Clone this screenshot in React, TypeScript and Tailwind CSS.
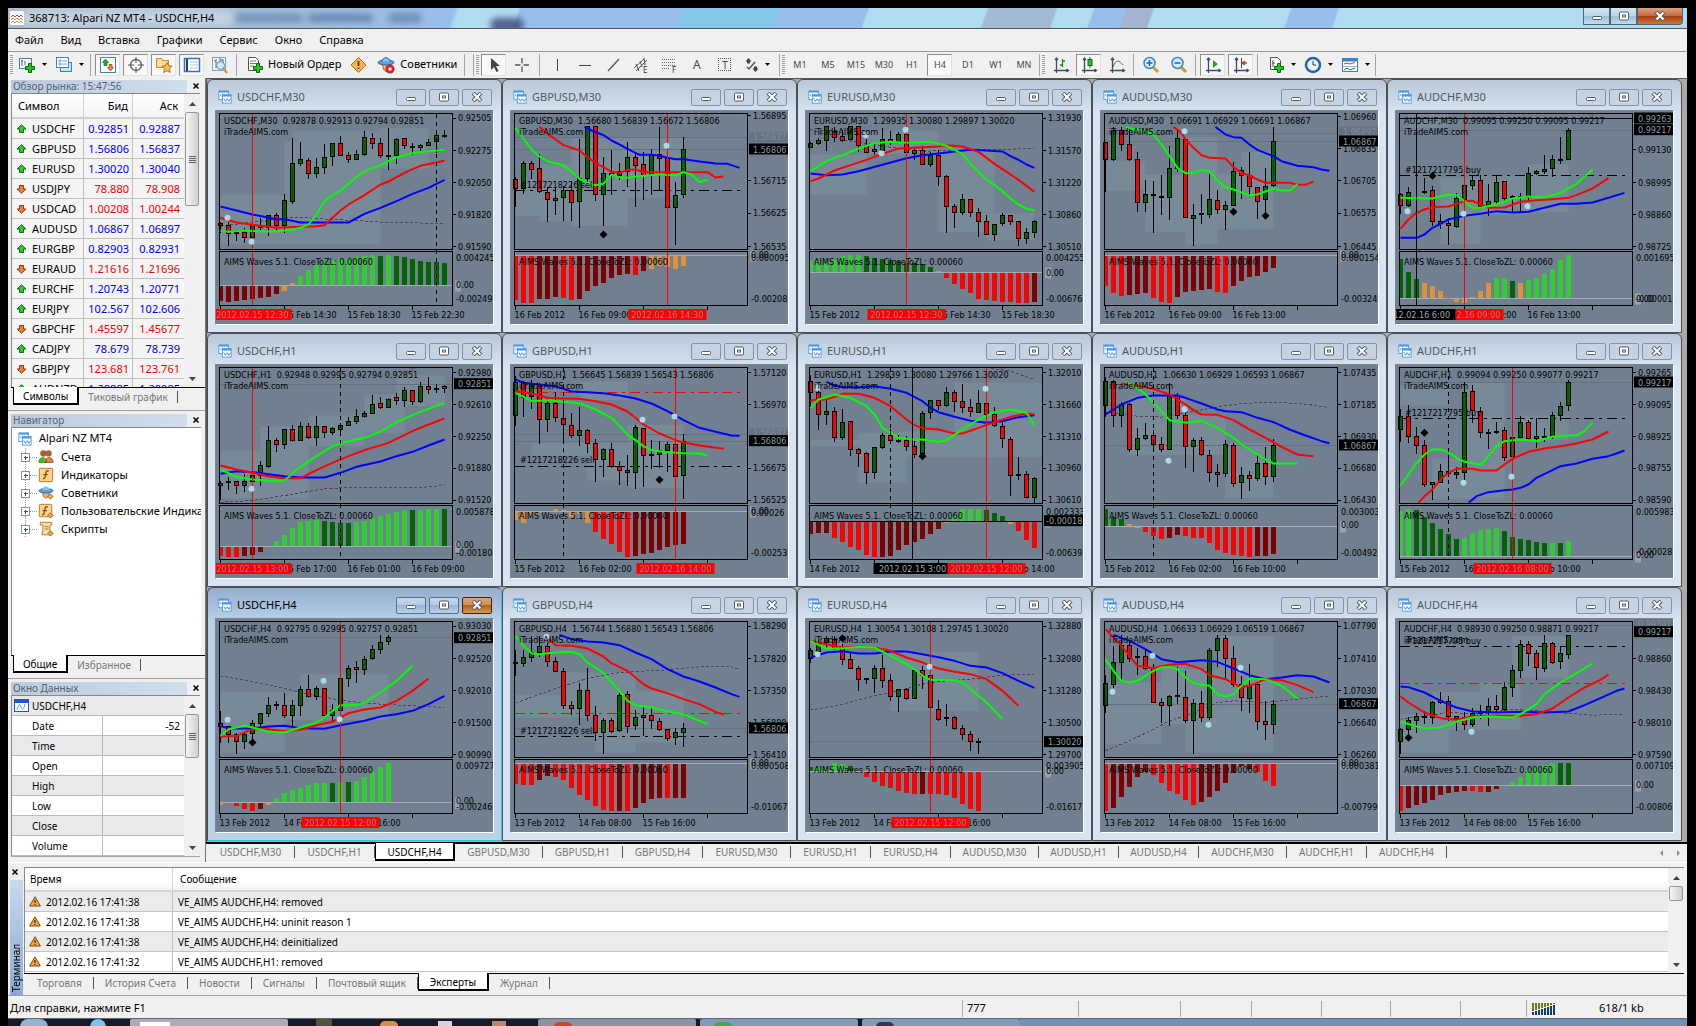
import { useState, ReactNode } from 'react';
import clsx from 'clsx';

// Chart data. Vertical values are in thirds of a pixel, horizontal ones are bar numbers.
interface Chart {
  symbol: string;
  quote: string;
  top: number;
  bars: string;
  blue: string;
  red: string;
  green: string;
  trend?: string;
  zero: number;
  waves: string;
  prices: [string, number][];
  tags?: [string, number][];
  ghosts?: [string, number][];
  scale: [string, number][];
  times: [string, number][];
  stamps?: [string, number, 'red' | 'black'][];
  vlines?: [number, 'red' | 'black' | 'dash'][];
  hlines?: [number, 'red' | 'black' | 'grey' | 'solid'][];
  order?: [string, number];
  dots?: [number, number][];
  diamonds?: [number, number][];
  zones?: [number, number, number, number][];
}

const charts: Chart[] = [
  {
    symbol: 'USDCHF,M30', quote: '0.92878 0.92913 0.92794 0.92851', top: 107,
    bars: 'd432,438,442,463 d432,442,468,503 u455,463,466,488 d448,463,478,493 u430,443,478,490 d418,443,448,455 u410,412,448,473 d405,412,442,455 u348,367,442,465 u178,256,370,377 u192,244,256,263 d240,248,286,302 u240,269,287,300 u198,238,268,286 u195,197,237,264 d174,196,232,232 d220,233,244,254 u214,230,244,244 u158,180,229,233 d165,182,196,213 d178,196,233,240 u148,232,234,275 u180,184,233,258 d178,182,202,212 u195,206,208,230 u196,202,208,217 u182,193,202,203 u165,172,192,225 d156,172,175,180',
    blue: '0:386 4:410 7:424 8:424 10:434 16:434 18:408 20:390 22:370 24:348 26:330 28:306',
    red: '0:420 2:434 4:441 7:450 10:447 12:445 13:442 14:420 15:398 16:380 18:352 20:320 21:311 22:298 23:285 24:274 25:264 27:254 28:248',
    green: '0:458 1:462 3:458 5:461 7:461 9:455 10:450 11:440 12:410 13:370 14:352 15:338 16:318 17:298 18:280 20:262 21:250 22:238 24:226 26:220 28:216',
    trend: '0:445 5:430 9:418 11:420 14:425 17:428 20:433 28:437',
    zero: 622,
    waves: 'm670 m672 m669 m666 m663 m660 m656 m648 o640 o615 l594 l575 l560 l550 l545 l542 l540 l538 l534 l532 g533 l531 g534 g537 g543 g549 g552 g552 g555',
    prices: [['0.92505', 121], ['0.92275', 218], ['0.92050', 314], ['0.91820', 410], ['0.91590', 506]],
    scale: [['0.004245', 541], ['0.00', 620], ['-0.00249', 662]],
    times: [['15 Feb 14:30', 8], ['15 Feb 18:30', 16], ['15 Feb 22:30', 24]],
    stamps: [['2012.02.15 12:30', 4, 'red']],
    vlines: [[4, 'red'], [27, 'dash']],
    dots: [[1, 420], [4, 492]],
    zones: [[0, 350, 8, 500], [8, 190, 9, 500], [9, 160, 20, 500], [20, 150, 26, 273]],
  },
  {
    symbol: 'GBPUSD,M30', quote: '1.56680 1.56839 1.56672 1.56806', top: 107,
    bars: 'd295,304,331,387 u247,256,331,348 d249,256,274,303 d226,271,340,345 d326,343,364,432 u325,361,368,410 u324,338,359,427 d307,339,374,427 u182,301,370,449 u147,147,301,310 d147,147,349,368 u235,286,349,444 d216,286,293,349 u254,281,294,306 u190,238,281,327 d225,238,262,387 d220,260,292,366 u213,229,292,349 d147,229,241,338 d240,241,388,399 u312,352,388,500 u177,214,349,359',
    blue: '8.6:147 9.5:158 11:172 12:188 13:200 14:213 15.5:231 17:231 18:234 19:240 20:244 21:244 23:251 25:257 26.5:258 28:270',
    red: '3:147 4:168 5:185 6:202 8:218 9:238 10:255 11:268 12:282 13:285 14:276 15:275 16:283 24:283 25:299 26:296',
    green: '0:150 1:182 2:215 3:236 4:250 6:262 7:282 8:303 9:315 10:322 11:318 12:290 13:298 14:300 16:294 18:290 20:293 21:283 22:290 23:313 24:306',
    zero: 533,
    waves: 'r667 r675 r675 m663 m663 m657 r660 r666 m663 m640 m624 m615 m600 m591 m588 r591 m579 o573 o563 o567 o573 o564',
    prices: [['1.56895', 113], ['1.56715', 308], ['1.56625', 406], ['1.56535', 506]],
    ghosts: [['1.56837', 178]],
    tags: [['1.56806', 212]],
    scale: [['0.00', 531], ['0.000095', 541], ['-0.00208', 662]],
    times: [['16 Feb 2012', 0], ['16 Feb 09:00', 8]],
    stamps: [['2012.02.16 14:30', 19, 'red']],
    vlines: [[19, 'red']],
    hlines: [[338, 'black'], [178, 'grey'], [214, 'grey']],
    order: ['#1217218226 sell', 320],
    dots: [[19, 204]], diamonds: [[11, 470]],
    zones: [[0, 305, 3, 414], [3, 260, 7, 430], [7, 180, 14, 443], [14, 180, 21, 360]],
  },
  {
    symbol: 'EURUSD,M30', quote: '1.29935 1.30080 1.29897 1.30020', top: 107,
    bars: 'u190,198,210,210 u178,187,196,200 u147,147,188,217 d147,160,178,190 d155,175,188,190 u147,147,184,186 d147,147,203,220 d182,202,224,224 u197,216,222,230 u150,184,217,225 d158,184,192,200 u160,169,190,192 d147,169,223,252 u213,217,227,245 d202,217,260,260 u222,233,260,265 d215,233,295,322 d290,295,385,464 d378,386,403,449 u348,364,403,410 d365,365,403,415 d388,403,430,477 d409,431,469,469 u437,439,469,488 u405,412,437,444 d410,412,430,440 d427,431,481,503 u449,463,481,497 u424,430,463,478',
    blue: '0:287 2:292 4:290 6:280 9:261 12:241 14:232 16:227 18:221 20:216 22:218 24:221 25:235 26:246 27:260 28:270',
    red: '0:310 1:302 3:278 5:262 7:246 9:228 11:212 13:210 16:206 17:202 19:206 21:222 22:240 23:258 24:274 25:290 26:306 27:324 28:342',
    green: '0:280 2:250 4:232 6:212 8:196 10:192 12:195 15:192 17:204 19:228 20:258 21:282 22:305 23:322 24:340 25:362 26:380 27:393 28:397',
    trend: '0:155 4:186 7:197 10:208 14:220 20:217 28:212',
    zero: 585,
    waves: 'l549 l549 l548 l546 l534 l531 l531 g534 g541 g544 g546 g550 g556 g555 g557 g568 o579 r600 r618 r633 r645 r663 r666 r669 r672 r672 r675 r675 m672',
    prices: [['1.31930', 121], ['1.31570', 218], ['1.31220', 314], ['1.30860', 410], ['1.30510', 506]],
    scale: [['0.004255', 541], ['0.00', 584], ['-0.00676', 662]],
    times: [['15 Feb 2012', 0], ['15 Feb 14:30', 16], ['15 Feb 18:30', 24]],
    stamps: [['2012.02.15 12:30', 12, 'red']],
    vlines: [[12, 'red']],
    dots: [[7, 172], [9, 226], [12, 156]],
    zones: [[0, 230, 7, 350], [7, 160, 16, 228], [16, 215, 23, 462], [22, 405, 28, 487]],
  },
  {
    symbol: 'AUDUSD,M30', quote: '1.06691 1.06929 1.06691 1.06867', top: 107,
    bars: 'd190,193,246,341 u147,157,246,247 d147,157,199,219 d147,199,244,249 d222,244,373,402 u306,349,373,402 d308,349,352,464 d291,355,358,411 u204,271,358,425 u153,181,271,280 d182,184,418,420 u377,412,421,503 u348,407,409,437 u287,364,409,420 d335,367,394,407 u367,382,394,456 u250,280,382,383 d267,277,292,362 d222,292,325,355 d328,328,370,422 u270,325,366,400 u147,190,322,325',
    blue: '13.8:147 15:170 16:178 17:180 18:200 19:216 20:226 21:235 22:250 24:264 26:268 27:275 28:279',
    red: '8.5:147 9.5:165 10:185 11:210 12:232 13:240 15:242 16:268 17:285 18:293 19:305 20:315 23:315 24:321 25:321 26:311',
    green: '2.5:147 3.5:154 4.5:157 6:170 7:200 8:235 9:270 10:286 11:286 12:277 13:280 14:308 15:328 16:335 18:353 19:350 20:341 21:332 22:338 23:338 24:319',
    zero: 533,
    waves: 'r624 r645 r654 m650 m648 m645 r660 r672 r675 m657 m642 m639 m636 m633 r642 r645 m624 m609 m597 m594 m582 m570',
    prices: [['1.06960', 116], ['1.06835', 213], ['1.06705', 308], ['1.06575', 406], ['1.06445', 506]],
    ghosts: [['1.06897', 161]],
    tags: [['1.06867', 188]],
    scale: [['0.00', 531], ['0.000154', 541], ['-0.00324', 662]],
    times: [['16 Feb 2012', 0], ['16 Feb 09:00', 8], ['16 Feb 13:00', 16]],
    hlines: [[166, 'grey'], [190, 'grey']],
    dots: [[10, 160]], diamonds: [[16, 402], [20, 414]],
    zones: [[0, 250, 5, 338], [5, 290, 10, 461], [10, 180, 14, 500], [14, 288, 17, 453], [17, 222, 21, 453]],
  },
  {
    symbol: 'AUDCHF,M30', quote: '0.99095 0.99250 0.99095 0.99217', top: 107,
    bars: 'd345,349,382,407 u327,344,382,387 - d300,340,344,348 d322,338,430,443 d407,431,437,452 d420,437,442,500 u344,361,445,450 u302,322,364,368 u290,307,322,334 d290,308,385,388 u317,370,382,413 u290,313,370,378 d308,310,361,370 u350,355,360,404 d345,355,360,402 u267,286,360,368 u275,281,286,289 u231,274,281,288 u229,244,271,297 d177,244,245,257 u148,157,244,246',
    blue: '0:480 2:480 3:470 4:450 5:438 6:425 8:414 10:408 12:400 14:404 16:402 18:390 20:378 22:378 24:374 26:360 28:345',
    red: '0:453 1:425 2:405 3:395 4:388 6:386 8:370 9:369 10:380 11:390 13:389 15:372 17:367 19:364 21:360 22:352 24:332 26:301',
    green: '0:360 4:362 6:350 7:352 8:370 9:390 10:390 12:380 14:362 16:356 18:359 20:345 22:318 24:275',
    zero: 663,
    waves: 'g543 g582 g603 o615 o624 o639 o660 o672 o675 o657 o639 o615 l600 l600 g609 o615 l606 l600 l588 l573 l546 l531',
    prices: [['0.99130', 215], ['0.98995', 314], ['0.98860', 410], ['0.98725', 506]],
    tags: [['0.99263', 119], ['0.99217', 154]],
    scale: [['0.001695', 541], ['0.00', 662], ['-0.000019', 662]],
    times: [['16 Feb 09:00', 8], ['16 Feb 13:00', 16]],
    stamps: [['2012.02.16 09:00', 8, 'red'], ['2012.02.16 6:00', 2, 'black']],
    vlines: [[8, 'red'], [2, 'black']],
    hlines: [[293, 'black'], [122, 'solid'], [157, 'grey']],
    order: ['#1217217795 buy', 275],
    dots: [[1, 400], [8, 408], [16, 385]], diamonds: [[4, 294]],
    zones: [[5, 300, 10, 497], [10, 293, 16, 410], [16, 260, 21, 402], [1, 107, 6, 150]],
  },
  {
    symbol: 'USDCHF,H1', quote: '0.92948 0.92995 0.92794 0.92851', top: 104,
    bars: 'd444,452,458,500 d431,445,449,471 d443,445,459,482 u422,445,458,476 u410,428,445,490 u383,398,428,458 u279,322,401,403 d315,322,335,355 u288,290,334,347 d275,290,324,326 u267,280,322,322 d269,281,315,317 u249,280,314,338 d280,281,299,314 u281,287,299,305 u268,278,289,301 u251,265,278,279 u228,250,266,272 u233,241,252,255 u184,214,241,241 d190,213,223,227 u194,199,224,224 d180,195,203,216 u160,172,203,222 d170,172,206,215 u147,160,206,209 d132,160,169,182 d151,167,170,178 d155,162,166,179',
    blue: '0:423 2:415 4:418 6:424 8:430 10:434 13:434 15:420 17:402 20:386 22:370 24:357 26:338 28:320',
    red: '0:398 2:410 4:420 6:430 8:436 10:436 12:412 14:390 16:370 18:352 21:330 24:295 26:275 28:257',
    green: '0:410 2:432 4:440 6:444 8:443 10:402 12:370 14:340 16:325 18:315 20:296 22:268 24:247 26:228 28:210',
    trend: '0:508 4:503 7:492 10:480 13:468 15:465 25:464 27:460 28:454',
    zero: 640,
    waves: 'r670 r672 r671 m669 m666 m657 - l624 l606 l585 l567 l563 l561 g564 g567 g570 g570 l567 l564 l555 l549 l543 l537 l531 g531 l531 l528 l528 g528',
    prices: [['0.92980', 119], ['0.92610', 215], ['0.92250', 311], ['0.91880', 406], ['0.91520', 502]],
    tags: [['0.92851', 151]],
    scale: [['0.005878', 538], ['0.00', 637], ['-0.00180', 659]],
    times: [['15 Feb 17:00', 8], ['16 Feb 01:00', 16], ['16 Feb 09:00', 24]],
    stamps: [['2012.02.15 13:00', 4, 'red']],
    vlines: [[4, 'red'], [15, 'dash']],
    hlines: [[154, 'grey']],
    dots: [[4, 468]],
    zones: [[0, 354, 5, 497], [5, 280, 11, 497], [11, 248, 18, 340], [18, 185, 23, 300], [22, 128, 28, 220]],
  },
  {
    symbol: 'GBPUSD,H1', quote: '1.56645 1.56839 1.56543 1.56806', top: 104,
    bars: 'u128,150,247,278 d144,150,193,250 u140,155,192,228 d150,155,259,333 u190,211,259,297 d175,211,253,265 d210,256,275,333 d240,278,307,314 u222,292,307,338 d288,292,331,360 d318,332,380,447 u345,349,379,430 d330,349,400,405 d382,401,412,456 d366,412,419,457 u274,283,418,468 d285,287,367,462 d320,364,367,407 u322,352,364,405 u325,334,352,417 d280,335,430,435 u302,325,428,497',
    blue: '0:140 1:150 3:155 5:160 7:176 9:178 11:181 13:188 15:197 17:212 19:235 20:248 21:262 23:285 25:297 27:308 28:309',
    red: '0:175 2:182 4:195 6:197 8:198 10:205 12:215 14:236 15:255 16:275 18:302 20:322 21:328 23:338 26:348',
    green: '0:180 1:192 2:205 4:202 6:207 8:211 10:230 12:255 13:280 14:305 15:322 16:340 17:352 19:358 21:361 23:362 24:368',
    zero: 535,
    waves: 'o560 o570 o548 o541 - o528 o531 o552 o543 o570 r597 r618 r633 r657 r671 m669 m663 m660 m651 m642 m635 m633',
    prices: [['1.57120', 119], ['1.56970', 215], ['1.56675', 406], ['1.56525', 502]],
    ghosts: [['1.56837', 301]],
    tags: [['1.56806', 322]],
    scale: [['0.00', 533], ['0.00026', 540], ['-0.00253', 659]],
    times: [['15 Feb 2012', 0], ['16 Feb 02:00', 8]],
    stamps: [['2012.02.16 14:00', 20, 'red']],
    vlines: [[6, 'dash'], [20, 'red']],
    hlines: [[178, 'red'], [400, 'black'], [304, 'grey'], [325, 'grey']],
    order: ['#1217218226 sell', 382],
    dots: [[16, 261], [20, 251]], diamonds: [[18, 441]],
    zones: [[2, 330, 9, 368], [9, 330, 14, 443], [8, 146, 14, 202], [14, 276, 21, 465]],
  },
  {
    symbol: 'EURUSD,H1', quote: '1.29839 1.30080 1.29766 1.30020', top: 104,
    bars: 'd125,145,178,220 d172,178,244,291 u200,237,245,276 d222,235,313,326 u228,268,313,321 d262,267,349,367 d345,349,361,401 d355,361,418,453 u340,344,418,437 u300,308,344,346 d287,308,322,325 d306,322,323,330 d308,324,340,354 d324,342,365,375 u234,241,363,372 u202,203,240,256 d203,203,217,230 u162,178,217,222 d171,180,205,235 d151,206,223,239 d198,223,236,250 u170,211,238,240 d147,211,245,280 d220,244,279,281 d262,280,318,345 d312,320,427,489 d370,424,427,440 d413,424,493,495 u430,436,493,510',
    blue: '2:147 3:158 4:163 6:163 8:160 10:168 12:180 14:205 15:225 16:238 18:252 20:264 22:270 24:265 26:253 28:247',
    red: '0:202 2:200 4:183 6:183 8:195 10:220 12:260 13:277 14:286 16:290 18:302 19:302 21:285 23:268 25:252 27:242 28:244',
    green: '0:225 1:200 3:185 5:195 7:220 8:245 9:285 11:315 13:320 14:320 16:327 17:322 19:290 21:260 23:238 25:230 27:240 28:278',
    trend: '22:104 25:115 28:140',
    zero: 566,
    waves: 'm603 m600 m600 r615 r627 r641 r650 r665 r671 m671 m668 m650 m636 m627 m618 m603 m588 o571 l545 l528 l528 l527 g531 g540 g549 o573 r594 r621 r645',
    prices: [['1.32010', 119], ['1.31660', 215], ['1.31310', 311], ['1.30960', 406], ['1.30610', 502]],
    scale: [['0.002333', 538], ['-0.00639', 659]],
    tags: [['-0.00018', 562]],
    times: [['14 Feb 2012', 0], ['15 Feb 14:00', 24]],
    stamps: [['2012.02.15 3:00', 12.7, 'black'], ['2012.02.15 12:00', 22, 'red']],
    vlines: [[10, 'dash'], [12.7, 'black'], [22, 'red']],
    hlines: [[566, 'solid']],
    dots: [[1, 165], [22, 168]], diamonds: [[14, 370]],
    zones: [[0, 321, 6, 340], [6, 300, 12, 450], [11, 296, 18, 372], [18, 150, 29, 372]],
  },
  {
    symbol: 'AUDUSD,H1', quote: '1.06630 1.06929 1.06593 1.06867', top: 104,
    bars: 'u130,147,217,252 d140,147,247,280 u205,214,247,280 d210,214,350,355 u283,316,350,369 u268,307,317,320 d290,308,334,350 d312,334,349,357 u150,187,349,350 d180,187,247,258 d240,247,340,403 u315,322,341,417 d310,322,366,369 d350,367,419,445 d392,419,425,460 u320,334,423,430 d330,337,451,460 u400,427,450,497 d412,427,437,473 u363,391,436,443 d340,391,430,456 u316,337,430,445',
    blue: '0:245 2:215 4:195 6:188 9:188 10:195 12:212 14:230 15:235 17:238 19:255 21:268 23:290 25:308 27:325 28:331',
    red: '2:152 4:158 6:168 8:185 10:215 11:232 12:245 14:246 16:262 18:290 20:315 22:342 24:365 26:370',
    green: '2.5:147 4:165 5:185 6:210 7:235 8:262 10:270 12:264 14:285 16:315 17:335 19:365 20:380 21:392 24:392',
    trend: '0:238 4:250 7:253 10:240 14:222 17:212 21:208 25:214 28:224',
    zero: 580,
    waves: 'g528 g552 g558 o573 o586 r597 r609 r618 m615 m606 r609 r615 r615 r630 r650 r660 r665 r670 r672 m669 m668 m663',
    prices: [['1.07435', 119], ['1.07185', 215], ['1.06930', 311], ['1.06680', 406], ['1.06430', 502]],
    tags: [['1.06867', 335]],
    scale: [['0.003003', 538], ['0.00', 577], ['-0.00492', 659]],
    times: [['15 Feb 2012', 0], ['16 Feb 02:00', 8], ['16 Feb 10:00', 16]],
    vlines: [[6, 'dash']],
    hlines: [[337, 'grey']],
    dots: [[10, 229], [8, 384]],
    zones: [[3, 190, 10, 366], [10, 245, 15, 366], [15, 330, 21, 495]],
  },
  {
    symbol: 'AUDCHF,H1', quote: '0.99094 0.99250 0.99077 0.99217', top: 104,
    bars: 'u228,250,290,325 d215,250,310,330 d280,310,338,362 d320,337,456,462 u448,448,456,500 u393,415,448,450 d366,415,423,430 u400,418,425,436 u147,178,418,447 d155,175,232,270 d222,235,300,313 d286,298,301,348 d265,295,297,303 d280,292,373,384 u290,313,372,465 u248,268,313,320 d260,268,318,322 u255,310,318,345 u285,310,313,326 u235,247,311,318 u205,220,247,262 u140,148,217,232',
    blue: '8.5:510 9.5:490 11:478 13:472 14:470 15:465 16:455 17:435 19:412 20:400 22:392 24:378 26:370 27:362 28:353',
    red: '2.3:510 3:490 4:470 5:440 6:420 7:408 9:408 10:413 12:413 13:395 14:378 16:357 18:347 20:340 22:332 24:320 26:296',
    green: '0:458 1:425 2:390 3:365 4:350 5:350 6:358 7:375 8:387 10:395 11:370 12:340 13:325 15:320 17:325 19:312 21:308 22:308 23:295 24:270',
    zero: 670,
    waves: 'l534 l528 g531 g552 g570 g588 g603 g618 l615 l600 l591 l588 l585 g594 g612 g618 g621 g627 g630 l630 g630 l624',
    prices: [['0.99265', 119], ['0.99095', 215], ['0.98925', 311], ['0.98755', 406], ['0.98590', 502]],
    tags: [['0.99217', 146]],
    scale: [['0.005983', 538], ['-0.00028', 657], ['0.00', 667]],
    times: [['15 Feb 2012', 0], ['16 Feb 02:00', 8], ['16 Feb 10:00', 16]],
    stamps: [['2012.02.16 08:00', 14, 'red']],
    vlines: [[6, 'dash'], [14, 'red']],
    hlines: [[256, 'black'], [148, 'grey']],
    order: ['#1217217795 buy', 240],
    dots: [[8, 450], [14, 432]], diamonds: [[3, 300]],
    zones: [[0, 160, 6, 218], [4, 378, 8, 497], [8, 418, 13, 497], [8, 150, 13, 418], [15, 248, 21, 322]],
  },
  {
    symbol: 'USDCHF,H4', quote: '0.92795 0.92995 0.92757 0.92851', top: 107,
    bars: 'd375,412,423,470 d420,423,445,470 d440,445,467,503 u440,446,467,487 u402,413,444,460 u380,383,412,427 u333,358,384,392 d345,356,359,371 d321,358,388,395 u340,358,388,425 u300,310,358,389 d265,310,331,335 u300,307,331,342 d304,307,388,395 u354,373,388,405 u246,277,373,400 u235,247,277,303 d225,246,250,290 u210,220,252,267 u175,190,217,222 u147,169,190,203 u147,156,168,176',
    blue: '0:420 1:428 4:428 6:422 8:420 10:427 13:429 15:418 18:405 20:392 22:385 24:375 26:355 28:330',
    red: '0:453 2:450 4:430 6:430 8:436 10:432 12:418 14:408 15:395 16:382 18:371 20:365 22:345 24:315 26:278',
    green: '0:450 1:430 3:420 4:425 6:438 8:440 10:425 12:410 13:395 14:375 15:358 17:358 18:350 20:320 22:285 24:240',
    trend: '0:270 4:288 8:308 12:330 16:347 20:355 24:360 28:365',
    zero: 649,
    waves: 'o657 - r660 r669 r675 m669 o657 l636 l621 l612 l606 l597 l591 l591 g591 l588 g588 l585 l573 l558 l543 l531',
    prices: [['0.93030', 121], ['0.92520', 218], ['0.92010', 314], ['0.91500', 410], ['0.90990', 506]],
    tags: [['0.92851', 154]],
    scale: [['0.009727', 541], ['0.00', 646], ['-0.00246', 662]],
    times: [['13 Feb 2012', 0], ['14 Feb 08:00', 8], ['15 Feb 16:00', 16]],
    stamps: [['2012.02.15 12:00', 15, 'red']],
    vlines: [[15, 'red']],
    hlines: [[156, 'grey']],
    dots: [[1, 402], [13, 285], [15, 400]], diamonds: [[4, 470]],
    zones: [[0, 318, 8, 500], [8, 318, 10, 402], [10, 265, 21, 402]],
  },
  {
    symbol: 'GBPUSD,H4', quote: '1.56744 1.56880 1.56543 1.56806', top: 107,
    bars: 'd190,229,232,270 u190,214,232,243 u148,199,214,228 u148,181,199,213 d170,181,226,243 d213,226,256,258 d245,256,358,367 d345,358,368,386 u290,313,367,417 d246,313,388,405 d360,388,440,463 u395,405,440,503 d395,405,437,440 u320,328,433,436 d315,325,421,440 u370,396,420,430 u358,388,396,450 d365,388,405,428 d395,406,430,435 d427,430,457,463 u425,439,455,475 u410,427,439,483',
    blue: '5.5:147 7:160 9:167 11:170 13:178 15:200 17:220 19:250 21:272 23:287 25:305 27:325 28:333',
    red: '4:155 5:178 7:180 9:188 11:212 12:232 14:255 15:275 16:295 17:308 19:322 21:340 23:355 25:378 26:386',
    green: '0:150 1:180 2:202 3:205 5:200 7:198 8:205 9:230 10:245 11:262 12:290 13:315 14:345 15:358 17:365 19:376 21:385 22:395 24:415',
    trend: '0:352 3:325 6:300 9:278 12:263 15:257 19:252 23:243 27:243 28:250',
    zero: 533,
    waves: 'r594 r597 r597 m582 m570 r573 r582 r606 r627 r642 r660 r672 r675 m675 r675 m666 m651 m639 m636 r636 m636 m636',
    prices: [['1.58290', 121], ['1.57820', 218], ['1.57350', 314], ['1.56880', 410], ['1.56410', 506]],
    tags: [['1.56806', 425]],
    scale: [['0.00', 531], ['0.000508', 541], ['-0.01067', 662]],
    times: [['13 Feb 2012', 0], ['14 Feb 08:00', 8], ['15 Feb 16:00', 16]],
    hlines: [[382, 'red'], [451, 'black'], [427, 'grey']],
    order: ['#1217218226 sell', 434],
    dots: [[4, 153]],
    zones: [[0, 327, 6, 395], [6, 260, 10, 395], [10, 260, 15, 500], [15, 316, 21, 470]],
  },
  {
    symbol: 'EURUSD,H4', quote: '1.30054 1.30108 1.29745 1.30020', top: 107,
    bars: 'u185,193,219,230 u160,172,196,205 u150,158,170,187 d150,160,188,190 d172,188,220,235 d200,220,247,248 d240,247,280,313 d275,279,281,293 u235,247,277,320 d205,247,283,305 d262,283,331,343 u308,311,332,377 d305,310,337,342 u250,254,337,338 d240,255,269,308 d230,268,364,403 d340,372,402,405 d353,394,397,420 d388,395,427,432 d415,427,445,460 d435,445,467,495 d455,466,469,503',
    blue: '0:215 2:200 4:196 6:203 8:203 10:197 12:197 14:205 16:214 18:225 20:240 22:245 24:262 26:285 28:306',
    red: '0:165 2:175 4:185 6:182 8:185 10:195 12:215 14:230 15:240 16:248 18:258 20:265 22:280 24:315 26:360',
    green: '0:165 2:188 4:188 6:183 8:185 10:210 12:235 13:250 14:270 15:282 18:283 19:290 20:310 22:350 24:400',
    trend: '0:373 4:355 8:330 11:315 14:295 16:287 20:280 24:268 28:266',
    zero: 556,
    waves: 'g543 l545 l548 l531 l534 g540 o562 r573 r588 r600 r606 r615 r621 r624 m624 r624 r624 r627 r636 r654 r669 r675',
    prices: [['1.32880', 121], ['1.32080', 218], ['1.31280', 314], ['1.30500', 410], ['1.29700', 506]],
    tags: [['1.30020', 466]],
    scale: [['0.003905', 541], ['0.00', 556], ['-0.01617', 662]],
    times: [['13 Feb 2012', 0], ['14 Feb 08:00', 8], ['15 Feb 16:00', 16]],
    stamps: [['2012.02.15 12:00', 15, 'red']],
    vlines: [[15, 'red']],
    hlines: [[468, 'grey']],
    dots: [[1, 205], [15, 243]], diamonds: [[4, 157]],
    zones: [[0, 160, 4, 282], [4, 200, 10, 282], [10, 200, 21, 375]],
  },
  {
    symbol: 'AUDUSD,H4', quote: '1.06633 1.06929 1.06519 1.06867', top: 107,
    bars: 'u265,292,358,380 u180,230,295,305 u147,178,230,285 d165,178,217,228 d185,213,216,265 d190,213,247,250 d232,247,349,350 d335,350,358,410 u325,331,358,420 d243,330,332,352 d255,334,403,410 u337,352,404,503 d315,352,394,407 u185,193,396,400 u147,157,193,243 d147,157,219,280 d180,219,295,302 d268,295,334,375 u232,298,337,380 d290,295,408,430 d345,408,415,461 u340,355,415,443',
    blue: '1:147 3:165 5:190 7:220 9:229 12:223 14:228 16:248 18:268 20:280 22:275 24:268 26:272 28:290',
    red: '0:130 1:155 2:180 3:210 4:240 6:247 8:237 10:234 12:250 13:268 15:280 17:305 18:300 20:280 22:283 24:298 26:319',
    green: '0:220 1:255 2:285 3:290 4:285 6:255 7:245 8:243 9:250 10:275 11:292 13:300 14:325 15:332 16:325 17:300 18:278 20:280 22:300 24:338',
    trend: '0:495 3:465 6:430 8:405 10:390 12:370 14:350 16:345 20:350 24:340 28:330',
    zero: 533,
    waves: 'r675 m666 m633 m603 m573 m558 r567 r591 r615 r624 r642 r657 m648 m633 m615 m591 m560 m540 m548 r558 r585 r600',
    prices: [['1.07790', 121], ['1.07410', 218], ['1.07030', 314], ['1.06640', 410], ['1.06260', 506]],
    tags: [['1.06867', 352]],
    scale: [['0.00', 530], ['0.000381', 541], ['-0.00799', 662]],
    times: [['13 Feb 2012', 0], ['14 Feb 08:00', 8], ['15 Feb 16:00', 16]],
    hlines: [[355, 'grey']],
    dots: [[1, 318], [6, 210], [13, 417], [17, 246]],
    zones: [[0, 290, 7, 473], [7, 243, 10, 416], [10, 250, 14, 500], [14, 150, 21, 500]],
  },
  {
    symbol: 'AUDCHF,H4', quote: '0.98930 0.99250 0.98871 0.99217', top: 107,
    bars: 'u425,430,468,503 u392,403,430,445 u380,391,405,440 d375,391,394,413 u345,349,394,414 d318,343,349,354 d330,346,391,405 d388,391,398,435 d378,394,415,430 u366,382,415,423 u357,377,382,398 u335,361,376,419 d327,361,371,378 u287,304,371,375 u237,253,304,333 u160,175,253,275 d165,176,202,240 d192,202,244,280 u147,172,247,258 d168,172,229,232 u178,202,227,248 u147,150,206,218',
    blue: '0:302 1:304 3:320 5:345 7:365 9:377 12:380 15:378 18:380 21:377 23:358 25:337 27:315 28:308',
    red: '0:332 1:350 3:380 5:397 7:402 9:392 12:390 15:390 17:385 19:368 21:335 23:305 25:282 26:266',
    green: '0:408 2:422 3:428 5:425 7:408 9:395 11:392 14:395 15:385 17:355 18:325 20:290 22:262 24:233',
    trend: '0:400 6:380 10:385 14:370 18:377 24:388 28:386',
    zero: 598,
    waves: 'r675 m666 m657 m651 m642 m627 m621 m618 m615 r615 r618 m618 m609 - l588 l573 l552 l543 l537 l531 g531 g531',
    prices: [['0.98860', 218], ['0.98430', 314], ['0.98010', 410], ['0.97590', 506]],
    ghosts: [['0.99301', 113]],
    tags: [['0.99217', 136]],
    scale: [['0.007109', 541], ['0.00', 596], ['-0.00806', 662]],
    times: [['13 Feb 2012', 0], ['14 Feb 08:00', 8], ['15 Feb 16:00', 16]],
    hlines: [[293, 'red'], [182, 'black'], [118, 'grey']],
    order: ['#1217217795 buy', 164],
    dots: [[9, 438]], diamonds: [[1, 456]],
    zones: [[0, 385, 6, 500], [4, 318, 10, 432], [10, 290, 15, 432], [14, 150, 21, 275]],
  },
];

const waveColors: Record<string, string> = { m: '#800000', r: '#ff0000', o: '#e0923a', l: '#32cd32', g: '#006400' };

const x = (bar: number) => 4.5 + Math.round(bar * 8);

function ChartPlot({ chart }: { chart: Chart }) {
  const y = (v: number) => (v - chart.top) / 3 + 2.5;
  const snap = (v: number) => Math.floor(y(v)) + 0.5;
  const line = (points: string) =>
    points
      .split(' ')
      .map((p) => p.split(':').map(Number))
      .map(([i, v]) => `${x(i)},${y(v)}`)
      .join(' ');
  const zero = snap(chart.zero);

  return (
    <svg className="block h-[213px] w-full bg-[#708090] font-['DejaVu_Sans_Condensed','Noto_Sans',sans-serif] text-[9px]" role="img" aria-label={chart.symbol}>
      {chart.zones?.map(([a, t, b, l], i) => (
        <rect key={i} x={x(a)} y={y(t)} width={(b - a) * 8} height={(l - t) / 3} fill="#788998" />
      ))}
      <path d="M192 3h8l-4 4z" fill="#66717e" />

      <g shapeRendering="crispEdges" fill="none">
        {chart.hlines?.map(([v, kind]) => (
          <line
            key={v}
            x1="4"
            x2={kind === 'grey' || kind === 'solid' ? 237 : 229}
            y1={snap(v)}
            y2={snap(v)}
            stroke={kind === 'grey' ? '#65717f' : kind === 'red' ? '#ff0000' : '#000'}
            strokeDasharray={kind === 'red' || kind === 'black' ? '10 5 3 5' : undefined}
          />
        ))}
        {chart.trend && <polyline points={line(chart.trend)} stroke="#5a3d63" strokeDasharray="3 2" />}
      </g>

      <g shapeRendering="crispEdges">
        {chart.bars.split(' ').map((bar, i) => {
          if (bar === '-') return null;
          const [high, open, close, low] = bar.slice(1).split(',').map((v) => snap(Number(v)));
          return (
            <g key={i} stroke="#000">
              <line x1={x(i)} x2={x(i)} y1={high} y2={low} />
              <rect x={x(i) - 2} y={open} width="4" height={Math.max(close - open, 1)} fill={bar[0] === 'u' ? '#006400' : '#ff0000'} />
            </g>
          );
        })}
      </g>

      <g fill="none" strokeWidth="2" strokeLinejoin="round">
        <polyline points={line(chart.blue)} stroke="#0000ff" />
        <polyline points={line(chart.red)} stroke="#ff0000" />
        <polyline points={line(chart.green)} stroke="#00ff00" />
      </g>

      <g shapeRendering="crispEdges">
        <line x1="4" x2="237" y1={zero} y2={zero} stroke="#a3adb8" />
        {chart.waves.split(' ').map((wave, i) => {
          if (wave === '-') return null;
          const end = Math.round(y(Number(wave.slice(1))));
          const down = end > zero;
          return (
            <rect
              key={i}
              x={Math.max(x(i) - 2.5, 4)}
              y={down ? zero + 0.5 : end}
              width={i === 0 ? 3 : 5}
              height={Math.max(Math.abs(end - zero) - 0.5, 1)}
              fill={waveColors[wave[0]]}
            />
          );
        })}
        {chart.hlines?.filter(([v, kind]) => kind === 'solid' && v === chart.zero).map(([v]) => (
          <line key={v} x1="4" x2="237" y1={zero} y2={zero} stroke="#000" />
        ))}
        {chart.vlines?.map(([i, kind]) => (
          <line
            key={i}
            x1={x(i)}
            x2={x(i)}
            y1="3"
            y2="194"
            stroke={kind === 'red' ? '#ff0000' : '#000'}
            strokeDasharray={kind === 'dash' ? '4 4' : undefined}
          />
        ))}
      </g>
      {chart.dots?.map(([i, v]) => (
        <circle key={`${i}-${v}`} cx={x(i) - 1} cy={y(v)} r="3" fill="#add8e6" />
      ))}
      {chart.diamonds?.map(([i, v]) => (
        <path key={i} d={`M${x(i)} ${y(v) - 4}l4 4-4 4-4-4z`} fill="#000" />
      ))}

      <g shapeRendering="crispEdges" fill="none" stroke="#000">
        <rect x="3.5" y="2.5" width="233" height="136" />
        <rect x="3.5" y="140.5" width="233" height="54" />
        {[0, 8, 16, 24].map((i) => (
          <line key={i} x1={x(i)} x2={x(i)} y1="195" y2="199" />
        ))}
        {chart.prices.map(([label, v]) => (
          <line key={label} x1="237" x2="240" y1={snap(v)} y2={snap(v)} />
        ))}
      </g>

      <text x="8" y="13" xmlSpace="preserve">{`${chart.symbol}  ${chart.quote}`}</text>
      <text x="8" y="24">iTradeAIMS.com</text>
      <text x="8" y="154">AIMS Waves 5.1. CloseToZL: 0.00060</text>
      {chart.order && <text x="9" y={y(chart.order[1]) + 3}>{chart.order[0]}</text>}

      <rect x="239" y={zero - 5} width="6" height="11" fill="#97a2ae" />
      {chart.scale.map(([label, v]) => (
        <text key={label} x="240" y={y(v) + 3}>{label}</text>
      ))}
      {chart.prices.map(([label, v]) => (
        <text key={label} x="242" y={y(v) + 3}>{label}</text>
      ))}
      {chart.ghosts?.map(([label, v]) => (
        <g key={label}>
          <rect x="238" y={y(v) - 5} width="40" height="10" fill="#66727f" />
          <text x="242" y={y(v) + 3} fill="#808c99">{label}</text>
        </g>
      ))}
      {chart.tags?.map(([label, v]) => (
        <g key={label}>
          <rect x="238" y={y(v) - 5} width="40" height="11" />
          <text x={label[0] === '-' ? 240 : 242} y={y(v) + 4} fill="#8d9aa8">{label}</text>
        </g>
      ))}

      {chart.times.map(([label, i]) => (
        <text key={label} x={x(i) - 1} y="207">{label}</text>
      ))}
      {chart.stamps?.map(([label, i, kind]) => (
        <g key={label}>
          <rect x={x(i) - 39} y="198" width="78" height="11" fill={kind === 'red' ? '#ff0000' : '#000'} />
          <text x={x(i)} y="207" textAnchor="middle" fill={kind === 'red' ? '#93808a' : '#9aa6b3'}>{label}</text>
        </g>
      ))}
    </svg>
  );
}

function ChartIcon() {
  return (
    <svg viewBox="0 0 16 16" className="size-[14px] shrink-0" fill="none">
      <rect x="1" y="1" width="11" height="10" fill="#fff" stroke="#4a9ae0" />
      <path d="M1 2h11" stroke="#4a9ae0" strokeWidth="2" />
      <path d="M3 7V5M5 8V4" stroke="#4a9ae0" />
      <rect x="5" y="5" width="10" height="10" fill="#fff" stroke="#4a9ae0" />
      <path d="M5 6.5h10" stroke="#4a9ae0" strokeWidth="2" />
      <path d="M6.5 9.5l2 3.5 2-3 2 3 1.5-3" stroke="#3c7fc0" />
    </svg>
  );
}

function WindowGlyph({ kind }: { kind: 'min' | 'max' | 'close' }) {
  return (
    <svg viewBox="0 0 12 10" className="h-[10px] w-3" fill="none">
      {kind === 'min' && <rect x="1.5" y="5.5" width="9" height="3" rx="1" fill="#fff" stroke="#555d68" />}
      {kind === 'max' && (
        <>
          <rect x="1.5" y="1" width="9" height="8" rx="1" fill="#fff" stroke="#555d68" />
          <rect x="4.5" y="4" width="3" height="2" fill="#fff" stroke="#555d68" />
        </>
      )}
      {kind === 'close' && (
        <>
          <path d="M2 1l8 8M10 1l-8 8" stroke="#555d68" strokeWidth="4" />
          <path d="M2.5 1.5l7 7M9.5 1.5l-7 7" stroke="#fff" strokeWidth="2" />
        </>
      )}
    </svg>
  );
}

function ChartWindow({ chart, active, onSelect }: { chart: Chart; active: boolean; onSelect: () => void }) {
  return (
    <section
      onMouseDown={onSelect}
      className={clsx(
        'min-w-0 rounded-t-md border border-[#4a4f55] px-[7px] pb-[7px]',
        active
          ? 'border-r-[#38c0e8] border-b-[#38c0e8] bg-[linear-gradient(180deg,#95aecb_0px,#b9d1ea_34px,#b9d1ea_100%)]'
          : 'bg-[linear-gradient(180deg,#bac8d7_0px,#d7e4f2_34px,#d7e4f2_100%)]',
      )}
    >
      <header className="flex h-[30px] items-center gap-[5px] pt-[4px] pr-[2px] pl-[3px]">
        <ChartIcon />
        <h2 className={clsx('flex-1 text-[11px] leading-4', active ? 'text-black' : 'text-[#4c5a5c]')}>{chart.symbol}</h2>
        <div className="flex gap-[3px]">
          {(['min', 'max', 'close'] as const).map((kind) => (
            <button
              key={kind}
              type="button"
              aria-label={kind}
              className={clsx(
                'flex h-[17px] w-[30px] items-center justify-center rounded-[2px] border',
                active && kind === 'close'
                  ? 'border-[#4c1d0c] bg-[linear-gradient(180deg,#dba87c_0%,#cf8d55_48%,#b0601c_50%,#d99a4e_100%)]'
                  : active
                    ? 'border-[#586f8c] bg-[linear-gradient(180deg,#c4d6ea_0%,#b4cae3_48%,#9ab6d6_50%,#b8d0ea_100%)]'
                    : 'border-[#8494a8] bg-[#c5d3e2]',
              )}
            >
              <WindowGlyph kind={kind} />
            </button>
          ))}
        </div>
      </header>
      <div className="border border-t-[#7d858e] border-r-white border-b-white border-l-[#7d858e]">
        <ChartPlot chart={chart} />
      </div>
    </section>
  );
}

function ToolButton({ label, pressed, children }: { label: string; pressed?: boolean; children: ReactNode }) {
  return (
    <button
      type="button"
      aria-label={label}
      className={clsx(
        'flex h-[22px] w-[25px] shrink-0 items-center justify-center text-[9px] text-[#4a4a4a]',
        pressed && 'border border-t-[#8e8e8e] border-r-[#e2e2e2] border-b-[#e2e2e2] border-l-[#8e8e8e] bg-[#f8f8f8]',
      )}
    >
      {children}
    </button>
  );
}

function Icon({ children }: { children: ReactNode }) {
  return (
    <svg viewBox="0 0 18 18" className="size-[18px] shrink-0" fill="none">
      {children}
    </svg>
  );
}

const Caret = () => (
  <svg viewBox="0 0 5 3" className="h-[3px] w-[5px] shrink-0">
    <path d="M0 0h5L2.5 3z" />
  </svg>
);

const Grip = () => <span className="mx-[2px] h-[20px] w-[3px] shrink-0 bg-[repeating-linear-gradient(180deg,#a0a0a0_0px,#a0a0a0_1px,transparent_1px,transparent_2px)]" />;
const Rule = () => <span className="h-[22px] w-px shrink-0 bg-[#a5a5a5]" />;

const Plus = () => <path d="M10.5 7.5h3v3h3v3h-3v3h-3v-3h-3v-3h3z" fill="#1fc81f" stroke="#0a6a0a" />;
const Axes = () => <path d="M4.5 2v15M2 14.5h14M3 4l1.5-2L6 4M14.5 13l2 1.5-2 1.5" stroke="#3d4c66" strokeWidth="1.3" />;
const Magnifier = ({ plus }: { plus?: boolean }) => (
  <>
    <path d="M11 11l5 5" stroke="#d8962c" strokeWidth="3" />
    <circle cx="7.5" cy="7" r="5.5" fill="#d6ecfb" stroke="#3a86cc" strokeWidth="1.5" />
    <path d={plus ? 'M4.5 7h6M7.5 4v6' : 'M4.5 7h6'} stroke="#1c62a8" strokeWidth="1.5" />
  </>
);

function Toolbar() {
  return (
    <div className="flex h-[27px] shrink-0 items-center border-t border-[#999] bg-[#f0f0f0] pb-px">
      <Grip />
      <button type="button" aria-label="Новый график" className="ml-[3px] flex items-center gap-[6px]">
        <Icon>
          <rect x="1.5" y="2.5" width="12" height="10" fill="#fff" stroke="#3b82c4" />
          <path d="M3 5h2M4 4v6M7 5v4" stroke="#556" />
          <Plus />
        </Icon>
        <Caret />
      </button>
      <button type="button" aria-label="Профили" className="mr-[6px] ml-[8px] flex items-center gap-[6px]">
        <Icon>
          <rect x="5.5" y="6.5" width="11" height="9" fill="#cfe4f7" stroke="#3b82c4" />
          <rect x="1.5" y="1.5" width="12" height="10" fill="#fff" stroke="#3b82c4" />
          <path d="M3 5h9M5 3v7M3 8h9" stroke="#79a7d3" />
        </Icon>
        <Caret />
      </button>
      <Rule />
      <div className="ml-[4px] flex gap-[3px]">
        <ToolButton label="Обзор рынка" pressed>
          <Icon>
            <rect x="1.5" y="1.5" width="15" height="15" fill="#fff" stroke="#3b82c4" />
            <path d="M6.5 3l3 3.500H8v3H5v-3H3.500z" fill="#28b428" stroke="#0a6a0a" strokeWidth=".7" />
            <path d="M11.5 15l-3-3.500H10v-3h3v3h1.500z" fill="#f08c28" stroke="#8a3c00" strokeWidth=".7" />
          </Icon>
        </ToolButton>
        <ToolButton label="Окно данных" pressed>
          <Icon>
            <circle cx="9" cy="9" r="5.5" stroke="#555" strokeWidth="1.3" />
            <path d="M9 1v6M9 11v6M1 9h6M11 9h6" stroke="#555" />
          </Icon>
        </ToolButton>
        <ToolButton label="Навигатор" pressed>
          <Icon>
            <path d="M1.5 2.500h5l1 2h6v7h-12z" fill="#fbdc96" stroke="#c98a2a" />
            <path d="M12 6.500l1.600 3.200 3.400.5-2.500 2.500.7 3.800-3.200-1.700-3.200 1.700.7-3.800L7 10.200l3.400-.5z" fill="#ffbe55" stroke="#b5701c" />
          </Icon>
        </ToolButton>
        <ToolButton label="Терминал" pressed>
          <Icon>
            <rect x="1.5" y="2.5" width="15" height="13" fill="#fff" stroke="#2f73c5" strokeWidth="1.5" />
            <path d="M3 3h2v12H3z" fill="#2a3f5c" />
            <path d="M7 6h8M7 9h8M7 12h8" stroke="#a8c4e2" />
          </Icon>
        </ToolButton>
        <ToolButton label="Тестер стратегий">
          <Icon>
            <rect x="1.5" y="1.5" width="13" height="13" fill="#f4f8fb" stroke="#8aa0b5" />
            <path d="M5 3v9M9 2v5M12 3v4M3 5h2M9 4h3" stroke="#667" />
            <path d="M12 12l4 5" stroke="#d8962c" strokeWidth="2.5" />
            <circle cx="9.5" cy="9.5" r="4" fill="#cfe8fb" stroke="#4a90d0" />
          </Icon>
        </ToolButton>
      </div>
      <span className="ml-[4px]" />
      <Rule />
      <button type="button" className="ml-[9px] flex items-center gap-[4px] text-[11px]">
        <Icon>
          <path d="M2.5 1.500h7l3 3v10h-10z" fill="#fff" stroke="#555" />
          <path d="M4 5h6M4 7.500h6M4 10h4" stroke="#777" />
          <Plus />
        </Icon>
        Новый Ордер
      </button>
      <button type="button" aria-label="MetaEditor" className="ml-[9px]">
        <Icon>
          <path d="M8.5 1.500L16 9l-7.500 7.500L1 9z" fill="#f7b552" stroke="#b06f14" />
          <path d="M8.5 5v5M8.500 11.500V13" stroke="#8a3c00" strokeWidth="2" />
        </Icon>
      </button>
      <button type="button" className="mr-[7px] ml-[9px] flex items-center gap-[5px] text-[11px]">
        <Icon>
          <path d="M5 8h9l-1 6c-2 2-5 2-6 0z" fill="#f0b460" stroke="#b5701c" />
          <ellipse cx="9" cy="6.500" rx="8" ry="2.500" fill="#5aa0e0" stroke="#2a68b0" />
          <path d="M5 5.500c0-5 8-5 8 0" fill="#86c0f2" stroke="#2a68b0" />
          <circle cx="13" cy="13" r="4.500" fill="#d81e1e" />
          <rect x="11.500" y="11.500" width="3" height="3" fill="#fff" />
        </Icon>
        Советники
      </button>
      <Rule />
      <span className="w-[8px]" />
      <Rule />
      <Grip />
      <ToolButton label="Курсор" pressed>
        <Icon><path d="M6 2v12l3-3 2.500 5 2-1-2.500-5H15z" fill="#444" /></Icon>
      </ToolButton>
      <div className="mr-[5px] ml-[3px]">
        <ToolButton label="Перекрестие">
          <Icon><path d="M9 2v5.500M9 10.500V16M2 9h5.500M10.500 9H16" stroke="#555" strokeWidth="1.3" /></Icon>
        </ToolButton>
      </div>
      <Rule />
      <div className="ml-[4px] flex gap-[3px]">
        <ToolButton label="Вертикальная линия"><Icon><path d="M9.500 3v12" stroke="#444" /></Icon></ToolButton>
        <ToolButton label="Горизонтальная линия"><Icon><path d="M3 9.500h12" stroke="#444" /></Icon></ToolButton>
        <ToolButton label="Трендовая линия"><Icon><path d="M4 15L15 3" stroke="#555" strokeWidth="1.3" /></Icon></ToolButton>
        <ToolButton label="Равноудаленный канал">
          <Icon>
            <path d="M2 12L12 3M4 15L15 4M4 8l3 7M8 5l2 6M12 2l1 7" stroke="#555" />
            <text x="11" y="17" fontSize="8" fill="#333">E</text>
          </Icon>
        </ToolButton>
        <ToolButton label="Линии Фибоначчи">
          <Icon>
            <path d="M2 3.500h14M2 6.500h14M2 9.500h14M2 12.500h8" stroke="#666" strokeDasharray="1 1" />
            <text x="12" y="17" fontSize="8" fill="#333">F</text>
          </Icon>
        </ToolButton>
        <ToolButton label="Текст"><span className="text-[12px]">A</span></ToolButton>
        <ToolButton label="Текстовая метка">
          <span className="flex size-[13px] items-center justify-center border border-dotted border-[#555] text-[10px] leading-none">T</span>
        </ToolButton>
      </div>
      <button type="button" aria-label="Стрелки" className="mr-[9px] ml-[6px] flex items-center gap-[4px]">
        <Icon>
          <path d="M5.500 2l3 3.500H7v2H4v-2H2.500zM12.500 16l-3-3.500H11v-2h3v2h1.500z" fill="#444" />
          <path d="M4 11l2 2 6-7" stroke="#555" strokeWidth="1.5" />
        </Icon>
        <Caret />
      </button>
      <Rule />
      <Grip />
      <div className="flex gap-[3px]">
        {['M1', 'M5', 'M15', 'M30', 'H1', 'H4', 'D1', 'W1', 'MN'].map((period) => (
          <ToolButton key={period} label={period} pressed={period === 'H4'}>{period}</ToolButton>
        ))}
      </div>
      <span className="ml-[3px]" />
      <Rule />
      <Grip />
      <div className="mr-[4px] ml-px flex gap-[3px]">
        <ToolButton label="Бары"><Icon><Axes /><path d="M10.500 3v8M8 9h2M11 5h2" stroke="#1c8a1c" strokeWidth="1.3" /></Icon></ToolButton>
        <ToolButton label="Свечи" pressed>
          <Icon><Axes /><path d="M10 1v11" stroke="#0a6a0a" /><rect x="8" y="3.500" width="4" height="6" fill="#2bc42b" stroke="#0a6a0a" /></Icon>
        </ToolButton>
        <ToolButton label="Линия"><Icon><Axes /><path d="M5 11c3-8 6-7 10-2" stroke="#1c8a1c" /></Icon></ToolButton>
      </div>
      <Rule />
      <div className="mr-[4px] ml-[4px] flex gap-[3px]">
        <ToolButton label="Увеличить"><Icon><Magnifier plus /></Icon></ToolButton>
        <ToolButton label="Уменьшить"><Icon><Magnifier /></Icon></ToolButton>
      </div>
      <Rule />
      <div className="mr-[4px] ml-[4px] flex gap-[3px]">
        <ToolButton label="Автопрокрутка" pressed><Icon><Axes /><path d="M9 4l5 4-5 4z" fill="#22a822" /></Icon></ToolButton>
        <ToolButton label="Сдвиг графика" pressed><Icon><Axes /><path d="M9.500 2v10" stroke="#345" /><path d="M15 7h-4M13 5l-3 2 3 2" stroke="#b04a10" strokeWidth="1.3" /></Icon></ToolButton>
      </div>
      <Rule />
      <button type="button" aria-label="Индикаторы" className="ml-[9px] flex items-center gap-[6px]">
        <Icon>
          <path d="M3.500 1.500h7l3 3v9h-10z" fill="#fff" stroke="#555" />
          <path d="M6 4v7M5 7h3" stroke="#555" />
          <Plus />
        </Icon>
        <Caret />
      </button>
      <button type="button" aria-label="Периоды" className="ml-[8px] flex items-center gap-[6px]">
        <Icon>
          <circle cx="9" cy="9" r="7" fill="#e6f2fc" stroke="#1f63b5" strokeWidth="2.5" />
          <path d="M9 5v4h3" stroke="#333" />
        </Icon>
        <Caret />
      </button>
      <button type="button" aria-label="Шаблоны" className="mr-[5px] ml-[8px] flex items-center gap-[6px]">
        <Icon>
          <rect x="1.500" y="2.500" width="15" height="13" fill="#fff" stroke="#3b82c4" />
          <path d="M1 4h16" stroke="#3b82c4" strokeWidth="3" />
          <path d="M3 8l3-1 3 1 5-1.500" stroke="#b04a10" />
          <path d="M2 10.500h14" stroke="#8fb8e0" />
          <path d="M3 14l3-2 3 2 5-2" stroke="#1c8a1c" />
        </Icon>
        <Caret />
      </button>
      <Rule />
    </div>
  );
}

const CloseGlyph = () => (
  <svg viewBox="0 0 6 6" className="size-[6px]">
    <path d="M.5.500l5 5M5.500.500l-5 5" stroke="#000" strokeWidth="1.5" />
  </svg>
);

function PanelHeader({ title }: { title: string }) {
  return (
    <header className="flex h-[14px] items-center">
      <h2 className="flex-1 bg-[linear-gradient(90deg,#bccbdb,#d0deec)] pl-[2px] text-[10px] leading-[13px] text-[#566272]">{title}</h2>
      <button type="button" aria-label="Закрыть" className="mr-[6px] ml-[5px] flex w-[7px] items-center justify-center">
        <CloseGlyph />
      </button>
    </header>
  );
}

function Scrollbar({ thumb }: { thumb: string }) {
  return (
    <div className="flex w-[16px] shrink-0 flex-col items-center bg-[#f0f0f0]">
      <svg viewBox="0 0 7 4" className="mt-[8px] mb-[6px] h-[4px] w-[7px]"><path d="M0 4h7L3.500 0z" fill="#444" /></svg>
      <div className={clsx('flex w-[14px] flex-col items-center justify-center gap-px rounded-[2px] border border-[#979797] bg-[linear-gradient(90deg,#f6f6f6,#cfcfcf)]', thumb)}>
        {thumb !== 'h-[15px]' && [0, 1, 2, 3].map((i) => <span key={i} className="h-px w-[7px] bg-[#666]" />)}
      </div>
      <svg viewBox="0 0 7 4" className="mt-auto mb-[6px] h-[4px] w-[7px]"><path d="M0 0h7L3.500 4z" fill="#444" /></svg>
    </div>
  );
}

function Tabs({ items, active, wide }: { items: string[]; active: string; wide?: boolean }) {
  return (
    <div className="flex h-[19px] items-start border-t border-black pl-[2px]">
      {items.map((item) => (
        <button
          key={item}
          type="button"
          className={clsx(
            'text-[10px]',
            wide ? 'px-[11px]' : 'px-[9px]',
            item === active
              ? '-mt-px h-[18px] border border-t-0 border-r-2 border-b-2 border-black bg-white pt-[2px] leading-[15px] text-black'
              : 'mt-[3px] border-r border-[#555] leading-[12px] text-[#777]',
          )}
        >
          {item}
        </button>
      ))}
    </div>
  );
}

const quotes: [string, string, string, boolean][] = [
  ['USDCHF', '0.92851', '0.92887', true],
  ['GBPUSD', '1.56806', '1.56837', true],
  ['EURUSD', '1.30020', '1.30040', true],
  ['USDJPY', '78.880', '78.908', false],
  ['USDCAD', '1.00208', '1.00244', false],
  ['AUDUSD', '1.06867', '1.06897', true],
  ['EURGBP', '0.82903', '0.82931', true],
  ['EURAUD', '1.21616', '1.21696', false],
  ['EURCHF', '1.20743', '1.20771', true],
  ['EURJPY', '102.567', '102.606', true],
  ['GBPCHF', '1.45597', '1.45677', false],
  ['CADJPY', '78.679', '78.739', true],
  ['GBPJPY', '123.681', '123.761', false],
  ['AUDNZD', '1.28885', '1.29085', true],
];

function MarketWatch() {
  return (
    <section className="border-b border-[#a0a0a0] pt-px pb-[4px] pl-[3px]">
      <PanelHeader title="Обзор рынка: 15:47:56" />
      <div className="mr-[5px] flex h-[294px] overflow-hidden border-t border-l border-[#888]">
        <table className="h-fit flex-1 table-fixed border-separate border-spacing-0 text-[11px] leading-[14px]">
          <colgroup>
            <col />
            <col className="w-[49px]" />
            <col className="w-[51px]" />
          </colgroup>
          <thead>
            <tr className="h-[25px] bg-[linear-gradient(180deg,#fff,#f2f3f5)]">
              <th className="border-r border-b-2 border-[#d0d0d0] pl-[6px] text-left font-normal">Символ</th>
              <th className="border-r border-b-2 border-[#d0d0d0] pr-[4px] text-right font-normal">Бид</th>
              <th className="border-b-2 border-[#d0d0d0] pr-[6px] text-right font-normal">Аск</th>
            </tr>
          </thead>
          <tbody>
            {quotes.map(([symbol, bid, ask, up]) => (
              <tr key={symbol} className={clsx('h-[20px] bg-[#f4f4f4]', up ? 'text-[#0000f0]' : 'text-[#f00000]')}>
                <td className="border-r border-b border-[#c0c0c0] pl-[4px] text-black">
                  <span className="flex items-center gap-[5px]">
                    <svg viewBox="0 0 11 10" className="h-[10px] w-[11px]">
                      {up
                        ? <path d="M5.500.800L10 5H7.500v3.500h-4V5H1z" fill="#35c635" stroke="#0c6e0c" />
                        : <path d="M5.500 9.200L1 5h2.500V1.500h4V5H10z" fill="#e8823a" stroke="#8e3b0a" />}
                    </svg>
                    {symbol}
                  </span>
                </td>
                <td className="border-r border-b border-[#c0c0c0] pr-[3px] text-right">{bid}</td>
                <td className="border-b border-[#c0c0c0] pr-[4px] text-right">{ask}</td>
              </tr>
            ))}
          </tbody>
        </table>
        <Scrollbar thumb="h-[94px]" />
      </div>
      <Tabs items={['Символы', 'Тиковый график']} active="Символы" />
    </section>
  );
}

const tree: [string, ReactNode][] = [
  ['Счета', <>
    <circle cx="6" cy="5" r="3.500" fill="#a86428" />
    <circle cx="12" cy="5" r="3.500" fill="#a86428" />
    <path d="M1 15c0-7 9-7 9 0zM8 15c0-7 9-7 9 0z" fill="#d89048" stroke="#8a4c18" />
    <circle cx="4" cy="13" r="3" fill="#1fc81f" />
  </>],
  ['Индикаторы', <>
    <rect x="1.500" y="1.500" width="15" height="15" rx="1" fill="#ffd48a" stroke="#b5701c" />
    <path d="M12 4.500c-3-1-3 1-3.500 4s-.5 5-3 4.500M6 8.500h5" stroke="#8a4c18" strokeWidth="1.5" />
  </>],
  ['Советники', <>
    <path d="M5 8h8l-1 5c-2 2-5 2-6 0z" fill="#f0b460" stroke="#b5701c" />
    <ellipse cx="9" cy="6.500" rx="8" ry="2.500" fill="#5aa0e0" stroke="#2a68b0" />
    <path d="M5 5.500c0-5 8-5 8 0" fill="#86c0f2" />
    <path d="M14 10l3 3-3 3-3-3z" fill="#f2a84a" stroke="#a86010" />
  </>],
  ['Пользовательские Индикаторы', <>
    <rect x="1.500" y="1.500" width="14" height="14" rx="1" fill="#ffd48a" stroke="#b5701c" />
    <path d="M11 4.500c-3-1-3 1-3.500 4s-.5 5-3 4.500M5 8.500h5" stroke="#8a4c18" strokeWidth="1.5" />
    <path d="M14 11l3 3-3 3-3-3z" fill="#f2a84a" stroke="#a86010" />
  </>],
  ['Скрипты', <>
    <path d="M2.500 1.500h13v3h-2v8h2v3h-11v-3h1v-8h-3z" fill="#ffe0a8" stroke="#b5701c" />
    <path d="M7 6.500h5M7 9h5" stroke="#b5701c" />
    <path d="M14 11l3 3-3 3-3-3z" fill="#f2a84a" stroke="#a86010" />
  </>],
];

function Navigator() {
  return (
    <section className="border-b border-[#a0a0a0] pt-[2px] pb-[4px] pl-[3px]">
      <PanelHeader title="Навигатор" />
      <div className="mr-[4px] h-[228px] overflow-hidden border-t border-l border-[#888] bg-white pt-px text-[11px]">
        <div className="flex h-[19px] items-center gap-[7px] pl-[6px]">
          <ChartIcon />
          Alpari NZ MT4
        </div>
        <ul>
          {tree.map(([label, drawing]) => (
            <li key={label} className="flex h-[18px] items-center pl-[9px] whitespace-nowrap">
              <svg viewBox="0 0 16 18" className="h-[18px] w-[16px] shrink-0" fill="none" shapeRendering="crispEdges">
                <path d="M4.500 0v5M4.500 14v4M9 9.500h7" stroke="#999" strokeDasharray="1 1" />
                <rect x=".5" y="5.500" width="8" height="8" fill="#fff" stroke="#919191" />
                <path d="M2.500 9.500h4M4.500 7.500v4" stroke="#2b4f9e" />
              </svg>
              <svg viewBox="0 0 18 18" className="mr-[7px] ml-px size-[16px] shrink-0" fill="none">{drawing}</svg>
              {label}
            </li>
          ))}
        </ul>
      </div>
      <Tabs items={['Общие', 'Избранное']} active="Общие" />
    </section>
  );
}

function DataWindow() {
  return (
    <section className="pt-[2px] pl-[3px]">
      <PanelHeader title="Окно Данных" />
      <div className="mr-[5px] flex h-[162px] overflow-hidden border border-r-0 border-[#888] border-b-[#aaa]">
        <table className="h-fit flex-1 table-fixed border-separate border-spacing-0 text-[10px] leading-[14px]">
          <colgroup>
            <col className="w-[91px]" />
            <col />
          </colgroup>
          <thead>
            <tr className="h-[20px] bg-[#e9e9e9]">
              <th colSpan={2} className="border-b border-[#bbb] text-left font-normal">
                <span className="flex items-center gap-[3px] pl-[2px] text-[10px]">
                  <svg viewBox="0 0 15 13" className="h-[13px] w-[15px]" fill="none">
                    <rect x=".5" y=".5" width="14" height="12" fill="#fff" stroke="#1d56c9" />
                    <path d="M0 2h15" stroke="#1d56c9" strokeWidth="4" />
                    <path d="M3 11c2-8 3-6 4-3s3 3 4-3" stroke="#4a9ae0" />
                  </svg>
                  USDCHF,H4
                </span>
              </th>
            </tr>
          </thead>
          <tbody>
            {['Date', 'Time', 'Open', 'High', 'Low', 'Close', 'Volume'].map((name, i) => (
              <tr key={name} className={clsx('h-[20px]', i % 2 ? 'bg-[#e9e9e9]' : 'bg-white')}>
                <td className="border-r border-b border-[#bbb] pl-[20px]">{name}</td>
                <td className="border-b border-[#bbb] pr-[4px] text-right">{name === 'Date' && '-52'}</td>
              </tr>
            ))}
          </tbody>
        </table>
        <Scrollbar thumb="h-[44px]" />
      </div>
    </section>
  );
}

const messages: [string, string][] = [
  ['2012.02.16 17:41:38', 'VE_AIMS AUDCHF,H4: removed'],
  ['2012.02.16 17:41:38', 'VE_AIMS AUDCHF,H4: uninit reason 1'],
  ['2012.02.16 17:41:38', 'VE_AIMS AUDCHF,H4: deinitialized'],
  ['2012.02.16 17:41:32', 'VE_AIMS AUDCHF,H1: removed'],
];

function Terminal() {
  return (
    <section className="flex h-[130px] border-b border-[#a0a0a0] pr-[3px]">
      <div className="flex w-[16px] flex-col items-center pl-px">
        <button type="button" aria-label="Закрыть" className="mt-[3px] mb-[5px] ml-[-4px]"><CloseGlyph /></button>
        <h2 className="w-[13px] flex-1 rotate-180 bg-[linear-gradient(180deg,#8ba9cf,#c8d9ec)] pt-[3px] text-[10px] leading-[13px] [writing-mode:vertical-rl]">Терминал</h2>
      </div>
      <div className="flex min-w-0 flex-1 flex-col pt-px">
        <div className="flex h-[106px] overflow-hidden border-t border-l border-[#888] bg-white">
          <table className="h-fit flex-1 table-fixed border-separate border-spacing-0 text-[10px] leading-[14px]">
            <colgroup>
              <col className="w-[148px]" />
              <col />
            </colgroup>
            <thead>
              <tr className="h-[24px] bg-[linear-gradient(180deg,#fff_50%,#f2f3f5)]">
                <th className="border-r border-b-2 border-[#d5d5d5] pl-[5px] text-left font-normal">Время</th>
                <th className="border-b-2 border-[#d5d5d5] pl-[7px] text-left font-normal">Сообщение</th>
              </tr>
            </thead>
            <tbody>
              {messages.map(([time, text], i) => (
                <tr key={i} className={clsx('h-[20px]', i % 2 ? 'bg-white' : 'bg-[#ebebeb]')}>
                  <td className="border-r border-b border-[#c3c3c3] pl-[4px]">
                    <span className="flex items-center gap-[5px]">
                      <svg viewBox="0 0 12 11" className="h-[11px] w-3" fill="none">
                        <path d="M6 .8L11.400 10H.6z" fill="#f0a63c" stroke="#7d4b12" />
                        <path d="M6 4v3M6 8v1" stroke="#5c3206" strokeWidth="1.3" />
                      </svg>
                      {time}
                    </span>
                  </td>
                  <td className="border-b border-[#c3c3c3] pl-[5px]">{text}</td>
                </tr>
              ))}
            </tbody>
          </table>
          <Scrollbar thumb="h-[15px]" />
        </div>
        <Tabs wide items={['Торговля', 'История Счета', 'Новости', 'Сигналы', 'Почтовый ящик', 'Эксперты', 'Журнал']} active="Эксперты" />
      </div>
    </section>
  );
}

export default function App() {
  const [current, setCurrent] = useState('USDCHF,H4');
  const tabs = ['USDCHF', 'GBPUSD', 'EURUSD', 'AUDUSD', 'AUDCHF'].flatMap((pair) => [`${pair},M30`, `${pair},H1`, `${pair},H4`]);

  return (
    <div className="flex h-screen flex-col overflow-hidden bg-black pt-[8px] pr-[9px] pl-[8px] font-['Noto_Sans','Open_Sans',sans-serif] text-black">
      {/* Title bar */}
      <header className="relative flex h-[21px] shrink-0 items-center overflow-hidden border-b border-[#555] bg-[linear-gradient(110deg,#a9bccd_0px,#9fbcdc_300px,#98bfeb_420px,#b0dcf2_425px,#b0dcf2_480px,#98bfeb_482px,#98bfeb_634px,#84c8e8_636px,#84c8e8_724px,#98bfeb_726px,#98bfeb_808px,#b0dcf2_810px,#b0dcf2_920px,#a3bad6_922px,#a3bad6_985px,#b0dcf2_987px,#b0dcf2_1020px,#98bfeb_1022px,#98bfeb_1050px,#a2b4d0_1052px,#a2b4d0_1076px,#b0dcf2_1078px,#b0dcf2_1205px,#98bfeb_1207px,#98bfeb_1250px,#b0dcf2_1252px)] pl-[2px]">
        <span className="absolute top-[6px] left-[225px] h-[8px] w-[70px] rounded-full bg-[#4f739f] opacity-60 blur-[3px]" />
        <span className="absolute top-[6px] left-[300px] h-[8px] w-[65px] rounded-full bg-[#3e6396] opacity-60 blur-[3px]" />
        <span className="absolute top-[5px] left-[380px] h-[10px] w-[34px] rounded-full bg-[#4f739f] opacity-60 blur-[3px]" />
        <span className="absolute top-[10px] left-[482px] h-[14px] w-[34px] rounded-full bg-[#3a4478] opacity-80 blur-[3px]" />
        <span className="absolute top-[2px] left-[12px] h-[16px] w-[215px] rounded-full bg-[#d5dde6] opacity-70 blur-[4px]" />
        <svg viewBox="0 0 14 14" className="relative size-[14px]" fill="none">
          <rect width="14" height="14" rx="1" fill="#fff" />
          <path d="M1 6l2-2 2 2 2-2 2 2 2-2 2 2" stroke="#d83a4a" />
          <path d="M1 9l2-2 2 2 2-2 2 2 2-2 2 2M1 12l2-2 2 2 2-2 2 2 2-2 2 2" stroke="#d8905a" />
        </svg>
        <h1 className="relative ml-[5px] flex-1 pt-px text-[11px]">368713: Alpari NZ MT4 - USDCHF,H4</h1>
        <div className="relative flex h-[17px] self-start pr-[4px]">
          {(['min', 'max', 'close'] as const).map((kind) => (
            <button
              key={kind}
              type="button"
              aria-label={kind}
              className={clsx(
                'flex items-center justify-center border border-t-0 border-[#51657c]',
                kind === 'close'
                  ? 'w-[46px] rounded-br-[4px] bg-[linear-gradient(180deg,#dba083_0%,#c9693c_48%,#a53a12_50%,#cf7a38_100%)]'
                  : 'w-[27px] bg-[linear-gradient(180deg,#d4e6f3_0%,#bcd4e6_48%,#9dbdd6_50%,#bcdcee_100%)]',
              )}
            >
              <WindowGlyph kind={kind} />
            </button>
          ))}
        </div>
      </header>

      <nav className="flex h-[22px] shrink-0 items-center gap-[17px] bg-[#f0f0f0] pl-[7px] text-[11px]">
        {['Файл', 'Вид', 'Вставка', 'Графики', 'Сервис', 'Окно', 'Справка'].map((item) => (
          <button key={item} type="button">{item}</button>
        ))}
      </nav>
      <Toolbar />

      <main className="flex shrink-0 bg-[#f0f0f0]">
        <aside className="w-[197px] shrink-0">
          <MarketWatch />
          <Navigator />
          <DataWindow />
        </aside>

        <div className="min-w-0 flex-1 border-l border-[#777]">
          <div className="grid grid-cols-5 border-t border-l border-[#555] bg-[#a9a9a9] pr-[5px] pb-px">
            {charts.map((chart) => (
              <ChartWindow key={chart.symbol} chart={chart} active={chart.symbol === current} onSelect={() => setCurrent(chart.symbol)} />
            ))}
          </div>
          <div className="flex h-[20px] items-start border-t-2 border-black pl-px">
            {tabs.map((tab) => (
              <button
                key={tab}
                type="button"
                onClick={() => setCurrent(tab)}
                className={clsx(
                  'shrink-0 text-[10px]',
                  tab.endsWith('M30') ? 'w-[88px]' : 'w-[80px]',
                  tab === current
                    ? '-mt-px h-[18px] border border-t-0 border-r-2 border-b-2 border-black bg-white pt-px leading-[16px]'
                    : 'mt-[2px] border-r border-[#555] leading-[12px] text-[#777]',
                )}
              >
                {tab}
              </button>
            ))}
            <svg viewBox="0 0 24 8" className="mt-[5px] mr-[5px] ml-auto h-[8px] w-[24px]" fill="#888">
              <path d="M5 1v6L2 4zM19 1v6l3-3z" />
            </svg>
          </div>
        </div>
      </main>

      <div className="h-[4px] shrink-0 border-t border-white bg-[#f0f0f0]" />
      <div className="shrink-0 bg-[#f0f0f0]"><Terminal /></div>

      {/* Status bar */}
      <footer className="flex h-[22px] shrink-0 items-center bg-[#f0f0f0] pt-[3px] text-[11px]">
        <span className="flex-1 pl-[2px]">Для справки, нажмите F1</span>
        <span className="w-[116px] border-l border-[#a8a8a8] pl-[4px]">777</span>
        <span className="h-[16px] w-[102px] border-l border-[#a8a8a8]" />
        <span className="h-[16px] w-[71px] border-l border-[#a8a8a8]" />
        <span className="h-[16px] w-[70px] border-l border-[#a8a8a8]" />
        <span className="h-[16px] w-[69px] border-l border-[#a8a8a8]" />
        <span className="h-[16px] w-[70px] border-l border-[#a8a8a8]" />
        <span className="h-[16px] w-[66px] border-l border-[#a8a8a8]" />
        <span className="flex w-[161px] items-center gap-[43px] border-l border-[#a8a8a8] pl-[5px]">
          <svg viewBox="0 0 24 12" className="h-[12px] w-[24px]" shapeRendering="crispEdges">
            {[0, 1, 2, 3, 4, 5, 6, 7].map((i) => (
              <g key={i}>
                <rect x={i * 3} width="2" height={8 - i} fill="#6b7d1a" />
                <rect x={i * 3} y={9 - i} width="2" height={3 + i} fill="#12406e" />
              </g>
            ))}
          </svg>
          618/1 kb
        </span>
      </footer>

      {/* Taskbar */}
      <div className="flex h-[8px] shrink-0 border-t border-[#667] bg-[#141c2a]">
        <span className="ml-[12px] h-[8px] w-[28px] overflow-hidden rounded-t-full bg-[#8fb4d4]" />
        <span className="ml-[42px] h-[8px] w-[16px] rounded-t-full bg-[#7cc4ec]" />
        <span className="ml-[24px] flex h-[8px] w-[158px] items-end rounded-t-[2px] bg-[#a9aeb6] pl-[10px]">
          <span className="h-[5px] w-[30px] bg-white" />
        </span>
        <span className="ml-[28px] h-[8px] w-[16px] bg-[#4a5540]" />
        <span className="ml-[48px] h-[5px] w-[18px] self-end rounded-t-full bg-[#d8903a]" />
        <span className="ml-[40px] h-[5px] w-[14px] self-end bg-[#cfd6dd]" />
        <span className="ml-[40px] h-[5px] w-[14px] self-end bg-[#b58a6a]" />
        <span className="ml-[32px] flex h-[8px] w-[158px] items-end rounded-t-[2px] bg-[#8b95a2] pl-[16px]">
          <span className="h-[5px] w-[18px] rounded-t-full bg-[#d8402c]" />
        </span>
        <span className="ml-[4px] flex h-[8px] w-[158px] items-end rounded-t-[2px] bg-[#7f9dbb] pl-[14px]">
          <span className="h-[5px] w-[18px] rounded-t-full bg-[#3fae3f]" />
        </span>
        <span className="ml-[4px] flex h-[8px] w-[158px] items-end rounded-t-[2px] bg-[#7f9dbb] pl-[14px]">
          <span className="h-[5px] w-[18px] rounded-t-full bg-[#2a3a50]" />
        </span>
        <span className="h-[8px] flex-1 bg-[#6f93b4]" />
      </div>
    </div>
  );
}
